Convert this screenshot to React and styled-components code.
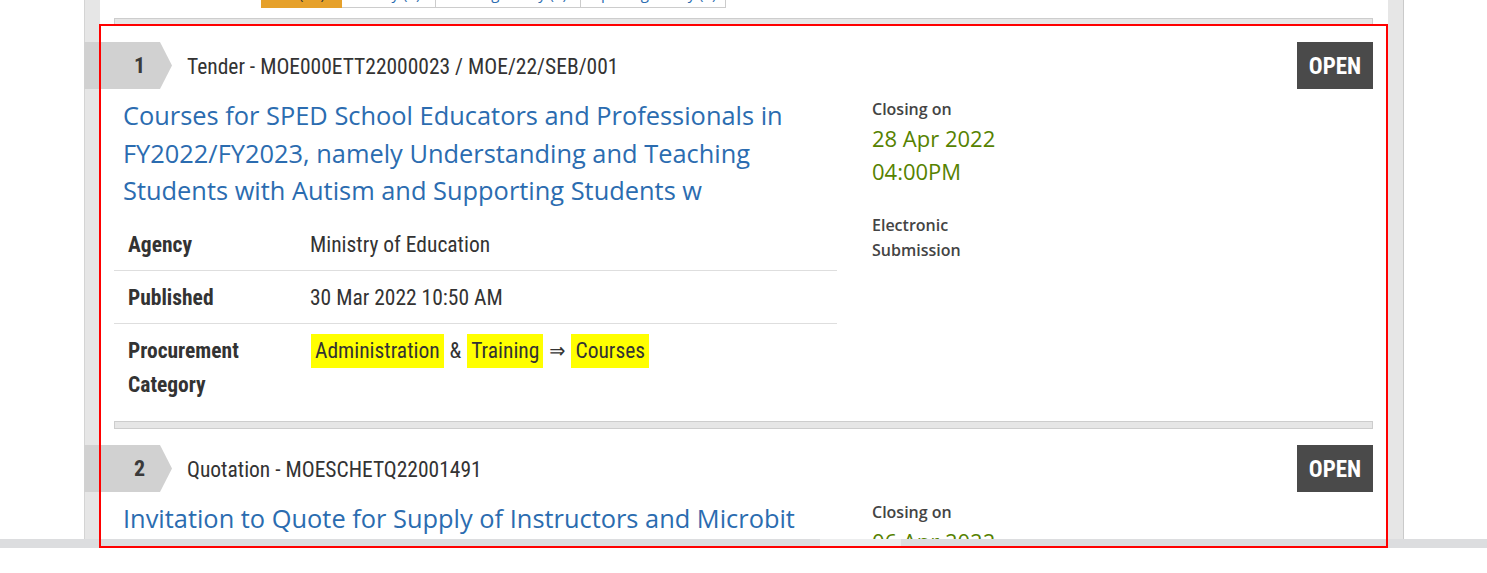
import styled, { createGlobalStyle } from "styled-components";

const GlobalStyle = createGlobalStyle`
  body {
    margin: 0;
    background: #fff;
    font-family: "Open Sans", "Liberation Sans", sans-serif;
    color: #333;
  }
`;

const condensed = `"Roboto Condensed", "Liberation Sans Narrow", "DejaVu Sans Condensed", Roboto, sans-serif`;

const Viewport = styled.div`
  position: relative;
  height: 548px;
  overflow: hidden;
`;

const Frame = styled.div`
  box-sizing: border-box;
  display: flow-root;
  width: 1320px;
  height: 100%;
  margin-left: 84px;
  padding: 0 15px;
  background: #e6e6e6;
  border-left: 1px solid #d4d4d4;
  border-right: 1px solid #cacaca;
`;

const Panel = styled.div`
  display: flow-root;
  height: 100%;
  background: #fff;
  padding: 0 15px 0 14px;
`;

const TabBar = styled.div`
  display: flex;
  margin: -30px 0 0 147px;
`;

const Tab = styled.div`
  box-sizing: border-box;
  width: ${(p) => p.width}px;
  height: 38px;
  display: flex;
  align-items: flex-end;
  justify-content: center;
  padding-bottom: 4px;
  font-size: 15px;
  line-height: 20px;
  color: ${(p) => (p.active ? "#333" : "#2b6cb0")};
  background: ${(p) => (p.active ? "#e6a12b" : "#fff")};
  border: 1px solid ${(p) => (p.active ? "#e6a12b" : "#cccccc")};
  border-left-width: ${(p) => (p.first ? 1 : 0)}px;
`;

const Divider = styled.div`
  box-sizing: border-box;
  height: 8px;
  background: #e6e6e6;
  border: 1px solid #cdcdcd;
  margin-top: ${(p) => p.top || 0}px;
`;

const Item = styled.div`
  padding: 16px 0 11px;
`;

const Header = styled.div`
  display: flex;
  align-items: center;
  height: 47px;
`;

const Number = styled.div`
  box-sizing: border-box;
  width: 88px;
  height: 47px;
  margin-left: -30px;
  padding-left: 50px;
  background: #d1d1d1;
  clip-path: polygon(0 0, 76px 0, 88px 50%, 76px 100%, 0 100%);
  font-family: ${condensed};
  font-weight: 700;
  font-size: 22px;
  line-height: 47px;
  color: #3a3a3a;
`;

const Ref = styled.div`
  margin: 2px 0 0 15px;
  font-family: ${condensed};
  font-size: 21.5px;
  color: #333;
`;

const Status = styled.div`
  margin-left: auto;
  width: 76px;
  height: 47px;
  background: #4a4a4a;
  color: #fff;
  font-family: ${condensed};
  font-weight: 700;
  font-size: 23px;
  line-height: 49px;
  text-align: center;
`;

const Body = styled.div`
  display: flex;
  align-items: flex-start;
`;

const Main = styled.div`
  width: 723px;
  flex: none;
`;

const Title = styled.a`
  display: block;
  margin: 8px 0 8.5px;
  padding: 0 9px;
  font-size: 25.4px;
  line-height: 37.5px;
  color: #2b6cb0;
  text-decoration: none;
`;

const Table = styled.div`
  display: grid;
  grid-template-columns: 182px 1fr;
`;

const Cell = styled.div`
  padding: 10px 14px 8px;
  font-family: ${condensed};
  font-size: 21.5px;
  line-height: 34px;
  font-weight: ${(p) => (p.label ? 700 : 400)};
  color: #333;
  border-bottom: ${(p) => (p.last ? "none" : "1px solid #dedede")};
`;

const Mark = styled.span`
  display: inline-block;
  margin: 0 1px;
  padding: 0 4px;
  background: #ffff00;
`;

const Side = styled.div`
  margin: 8px 0 0 35px;
`;

const Caption = styled.div`
  font-size: 16px;
  font-weight: 600;
  line-height: ${(p) => p.lh || 24}px;
  margin-top: ${(p) => p.top || 0}px;
  color: #444;
`;

const Closing = styled.div`
  margin-top: 1px;
  font-size: 22px;
  line-height: 33px;
  color: #568200;
`;

const Scrollbar = styled.div`
  position: absolute;
  left: 0;
  right: 0;
  top: 539px;
  height: 9px;
  background: #dcdddf;
`;

const Thumb = styled.div`
  margin-left: 820px;
  width: 81px;
  height: 100%;
  background: #ecedee;
`;

const Highlight = styled.div`
  position: absolute;
  left: 99px;
  top: 24px;
  width: 1289px;
  height: 524px;
  box-sizing: border-box;
  border: 2px solid #ff0000;
  pointer-events: none;
`;

const tabs = [
  { label: "All (24)", width: 81, active: true },
  { label: "Today (2)", width: 94 },
  { label: "Closing Today (7)", width: 145 },
  { label: "Opening Today (9)", width: 145 },
];

const notices = [
  {
    no: 1,
    ref: "Tender - MOE000ETT22000023 / MOE/22/SEB/001",
    title:
      "Courses for SPED School Educators and Professionals in FY2022/FY2023, namely Understanding and Teaching Students with Autism and Supporting Students w",
    agency: "Ministry of Education",
    published: "30 Mar 2022 10:50 AM",
    date: "28 Apr 2022",
    time: "04:00PM",
  },
  {
    no: 2,
    ref: "Quotation - MOESCHETQ22001491",
    title:
      "Invitation to Quote for Supply of Instructors and Microbit Kits for Coding Enrichment Programme",
    agency: "Ministry of Education",
    published: "30 Mar 2022 10:42 AM",
    date: "06 Apr 2022",
    time: "04:00PM",
  },
];

const Notice = ({ n }) => (
  <>
    <Divider top={n.no === 1 ? 10 : 0} />
    <Item>
      <Header>
        <Number>{n.no}</Number>
        <Ref>{n.ref}</Ref>
        <Status>OPEN</Status>
      </Header>
      <Body>
        <Main>
          <Title href="#">{n.title}</Title>
          <Table>
            <Cell label>Agency</Cell>
            <Cell>{n.agency}</Cell>
            <Cell label>Published</Cell>
            <Cell>{n.published}</Cell>
            <Cell label last>
              Procurement Category
            </Cell>
            <Cell last>
              <Mark>Administration</Mark> &amp; <Mark>Training</Mark> ⇒{" "}
              <Mark>Courses</Mark>
            </Cell>
          </Table>
        </Main>
        <Side>
          <Caption>Closing on</Caption>
          <Closing>
            {n.date}
            <br />
            {n.time}
          </Closing>
          <Caption top={25} lh={25}>
            Electronic
            <br />
            Submission
          </Caption>
        </Side>
      </Body>
    </Item>
  </>
);

const App = () => (
  <>
    <GlobalStyle />
    <Viewport>
      <Frame>
        <Panel>
          <TabBar>
            {tabs.map((t, i) => (
              <Tab key={t.label} width={t.width} active={t.active} first={i === 0}>
                {t.label}
              </Tab>
            ))}
          </TabBar>
          {notices.map((n) => (
            <Notice key={n.no} n={n} />
          ))}
        </Panel>
      </Frame>
      <Scrollbar>
        <Thumb />
      </Scrollbar>
      <Highlight />
    </Viewport>
  </>
);

export default App;
